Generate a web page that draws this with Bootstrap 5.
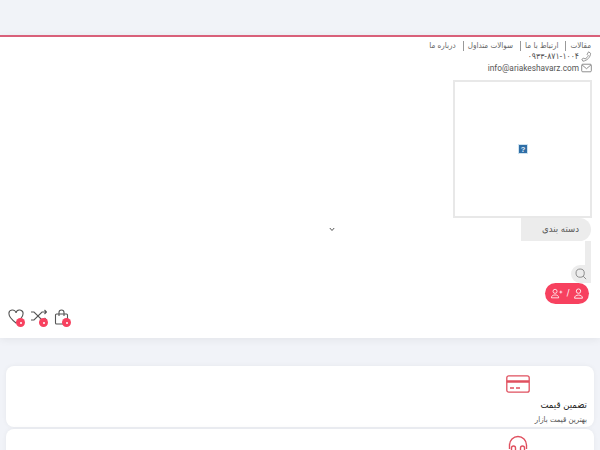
<!DOCTYPE html>
<html lang="fa" dir="rtl">
<head>
<meta charset="utf-8">
<title>آریا کشاورز</title>
<link href="https://cdn.jsdelivr.net/npm/bootstrap@5.3.0/dist/css/bootstrap.min.css" rel="stylesheet">
<style>
html,body{height:450px;overflow:hidden}
body{background:#f1f3f8;font-family:"DejaVu Sans Condensed","DejaVu Sans",sans-serif;font-stretch:condensed;color:#444}
svg{display:block}
.topband{height:35px}
.shell{background:#fff;border-top:2px solid #d9607a;height:303px;box-shadow:0 2px 8px rgba(0,0,0,.06);padding:0 8px}
.toplinks{font-size:8px;padding-top:4px;height:13px;line-height:10px;color:#666}
.toplinks span{padding:0 7px 0 4px;border-left:1px solid #999;display:inline-block;height:10px;line-height:10px}
.toplinks span:first-child{padding-right:1px}
.toplinks span:last-child{border-left:0}
.contact{height:12px;line-height:12px;color:#555;gap:2px}
.contact svg{flex:none}
.phone-num{font-size:8.6px}
.mail-addr{font-family:"Roboto",sans-serif;font-stretch:normal;font-size:8.300px}
.logobox{width:139px;height:138px;border:2px solid #e8e8e8;margin-top:6px}
.catrow{height:23px;padding-left:313px}
.catbtn{width:70px;height:23px;background:#ececec;border-radius:0 12px 12px 0;font-size:9.500px;color:#555;margin-right:1px;padding-left:9px}
.chev{margin-left:8px;margin-right:auto}
.searchcol{width:20px;height:42px;margin-right:1px}
.searchbar{width:6px;height:24px;background:#ececec}
.searchcell{width:20px;height:18px;background:#ececec;border-radius:9px 0 0 9px}
.loginbtn{width:44px;height:21px;background:#f7415f;border-radius:11px;margin-right:3px;color:#fff;font-size:9px}
.iconrow{margin-top:5px;gap:6px}
.iconcell{width:17px;height:18px}
.dot{position:absolute;width:9px;height:9px;border-radius:50%;background:#f7415f;left:8px;top:9px}
.dot::after{content:"";position:absolute;left:3.500px;top:3.500px;width:2px;height:2px;border-radius:50%;background:#fff}
.feature{background:#fff;border-radius:8px;margin:0 6px 2px;height:61px;padding:9px 7px 0;box-shadow:0 0 5px rgba(0,0,0,.05);overflow:hidden}
.feature .glyph{width:138px;height:18px;margin-bottom:4px}
.feature .glyph.raised{margin-top:-3px}
.feature h6{font-size:9.500px;font-weight:400;margin:0;color:#222;line-height:15px}
.feature p{font-size:7.800px;margin:0;color:#555;line-height:15px}
.stack{margin-top:28px}
</style>
</head>
<body>
<div class="topband"></div>
<header class="shell">
  <div class="toplinks"><span>مقالات</span><span>ارتباط با ما</span><span>سوالات متداول</span><span>درباره ما</span></div>
  <div class="contact d-flex align-items-center">
    <svg width="11" height="11" viewBox="0 0 16 16" fill="none" stroke="#777" stroke-width="1.100"><path d="M11 1.200l3 2.200c-.3 5.500-5 10.800-11.200 11.400L1.200 12l3-1.800 1.500 1.500c2.200-1 4-3 4.800-5.200L8.900 4.900z"/></svg>
    <span class="phone-num" dir="ltr">۰۹۳۳-۸۷۱-۱۰۰۴</span>
  </div>
  <div class="contact d-flex align-items-center">
    <svg width="11" height="10" viewBox="0 0 16 14" fill="none" stroke="#777" stroke-width="1.200"><rect x="1" y="1.500" width="14" height="11" rx="1.500"/><path d="M1.500 2.500L8 8l6.500-5.500"/></svg>
    <span class="mail-addr" dir="ltr">info@ariakeshavarz.com</span>
  </div>
  <div class="logobox d-flex align-items-center justify-content-center">
    <svg width="10" height="10" viewBox="0 0 10 10"><rect width="10" height="10" fill="#cfe3f0"/><rect x="1" y="1" width="8" height="8" fill="#2f6ea6"/><text x="5" y="8" font-size="7.500" font-weight="700" text-anchor="middle" fill="#e8f2fa" font-family="Liberation Sans">?</text></svg>
  </div>
  <div class="catrow d-flex align-items-center">
    <div class="catbtn d-flex align-items-center justify-content-center">دسته بندی</div>
    <svg class="chev" width="6" height="5" viewBox="0 0 6 5" fill="none" stroke="#555" stroke-width="1"><path d="M.8 1L3 3.500 5.200 1"/></svg>
  </div>
  <div class="searchcol d-flex flex-column">
    <div class="searchbar"></div>
    <div class="searchcell d-flex align-items-center justify-content-center">
      <svg width="12" height="12" viewBox="0 0 14 14" fill="none" stroke="#888" stroke-width="1.100"><circle cx="6" cy="6" r="4.800"/><path d="M9.500 9.500L13 13"/></svg>
    </div>
  </div>
  <div class="loginbtn d-flex align-items-center justify-content-center gap-1">
    <svg width="11" height="11" viewBox="0 0 14 14" fill="none" stroke="#fff" stroke-width="1.100"><circle cx="7" cy="4" r="2.800"/><path d="M2 13c0-2.800 2-4 5-4s5 1.200 5 4z"/></svg>
    <span>/</span>
    <svg width="13" height="11" viewBox="0 0 18 14" fill="none" stroke="#fff" stroke-width="1.100"><circle cx="7" cy="4" r="2.800"/><path d="M2 13c0-2.800 2-4 5-4s5 1.200 5 4zM13 5h4M15 3v4"/></svg>
  </div>
  <div class="iconrow d-flex" dir="ltr">
    <div class="iconcell position-relative"><svg width="16" height="15" viewBox="0 0 16 15" fill="none" stroke="#555" stroke-width="1.100"><path d="M8 14C3 10 1 8 1 5a3.500 3.500 0 0 1 7-1 3.500 3.500 0 0 1 7 1c0 3-2 5-7 9z"/></svg><i class="dot"></i></div>
    <div class="iconcell position-relative"><svg width="16" height="14" viewBox="0 0 16 14" fill="none" stroke="#555" stroke-width="1.100"><path d="M0 3h3l8 8h4M0 11h3l8-8h4M13.500 1l2 2-2 2M13.500 9l2 2-2 2"/></svg><i class="dot"></i></div>
    <div class="iconcell position-relative"><svg width="15" height="16" viewBox="0 0 15 16" fill="none" stroke="#555" stroke-width="1.100"><rect x="1.500" y="5" width="12" height="10" rx="1"/><path d="M5 7V3.500a2.500 2.500 0 0 1 5 0V7"/></svg><i class="dot"></i></div>
  </div>
</header>
<main class="stack">
  <section class="feature">
    <div class="glyph d-flex justify-content-center"><svg width="24" height="18" viewBox="0 0 24 18" fill="none" stroke="#e0505f" stroke-width="1.300"><rect x=".8" y=".8" width="22.400" height="16.400" rx="2"/><path d="M.8 6.500h22.400" stroke-width="2.500"/><path d="M4 13h4M10 13h4"/></svg></div>
    <h6>تضمین قیمت</h6>
    <p>بهترین قیمت بازار</p>
  </section>
  <section class="feature">
    <div class="glyph raised d-flex justify-content-center"><svg width="20" height="22" viewBox="0 0 20 22" fill="none" stroke="#e0505f" stroke-width="1.400"><path d="M1.500 14V10a8.500 8.500 0 0 1 17 0v4"/><rect x="3.500" y="11" width="4" height="9" rx="2"/><rect x="12.500" y="11" width="4" height="9" rx="2"/></svg></div>
  </section>
</main>
<script src="https://cdn.jsdelivr.net/npm/bootstrap@5.3.0/dist/js/bootstrap.bundle.min.js"></script>
</body>
</html>
